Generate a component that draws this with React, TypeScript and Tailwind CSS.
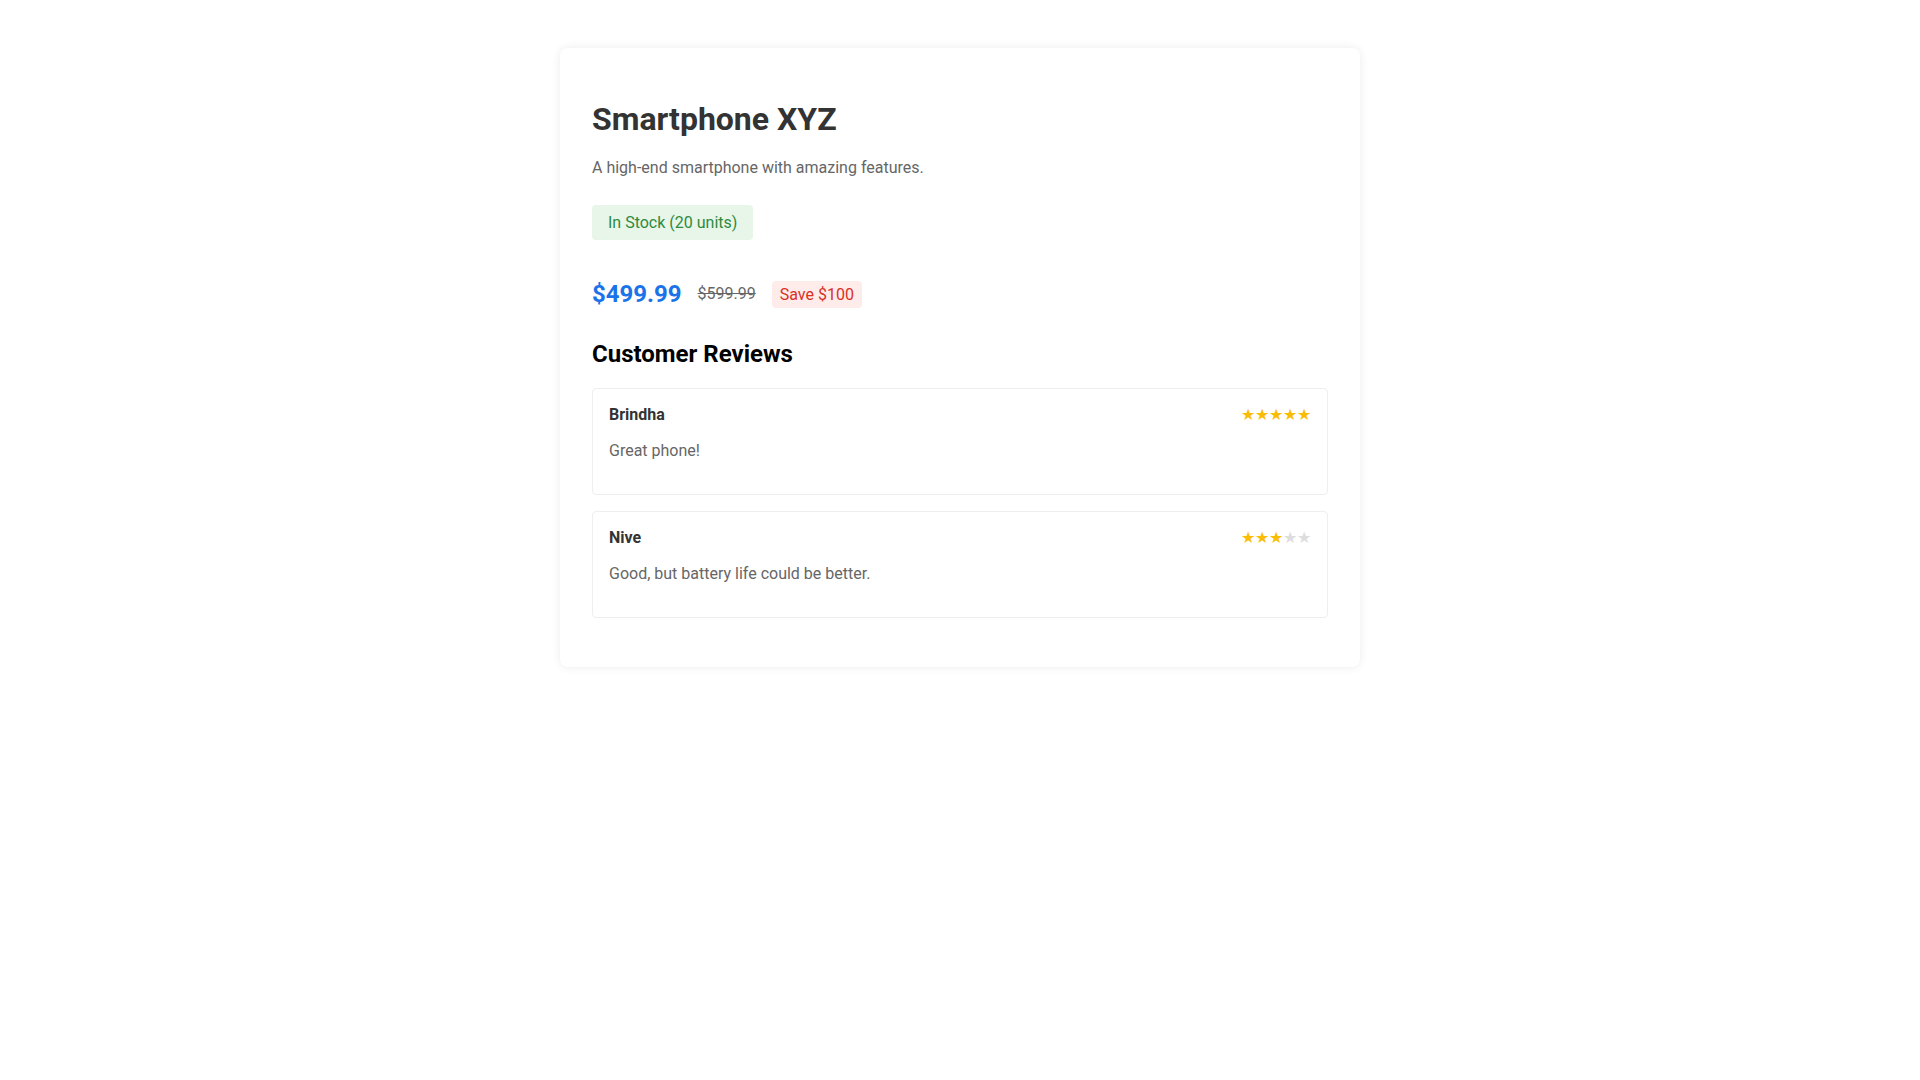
import React from "react";

const reviews = [
  { name: "Brindha", rating: 5, text: "Great phone!" },
  { name: "Nive", rating: 3, text: "Good, but battery life could be better." },
];

function Stars({ rating }: { rating: number }) {
  return (
    <div className="flex text-[16px] leading-none">
      {[1, 2, 3, 4, 5].map((i) => (
        <span key={i} className={i <= rating ? "text-[#fbbc04]" : "text-[#dddddd]"}>
          ★
        </span>
      ))}
    </div>
  );
}

export default function App() {
  return (
    <div className="min-h-screen bg-white pt-12" style={{ fontFamily: "Roboto, 'Liberation Sans', sans-serif" }}>
      <div className="mx-auto w-[800px] rounded-lg bg-white px-8 pt-8 pb-[49px] shadow-[0_0_10px_rgba(0,0,0,0.08)]">
        <h1 className="mt-[19px] text-[32px] font-bold leading-[40px] text-[#333333]">Smartphone XYZ</h1>
        <p className="mt-[17px] text-[16px] leading-[24px] text-[#666666]">A high-end smartphone with amazing features.</p>
        <div className="mt-[25px] inline-block rounded bg-[#e8f5e9] px-4 py-[7px] text-[16px] leading-[21px] text-[#2e8b3e]">
          In Stock (20 units)
        </div>
        <div className="mt-[40px] flex items-center gap-4">
          <span className="text-[24px] font-bold leading-[28px] text-[#1a73e8]">$499.99</span>
          <span className="text-[16px] text-[#666666] line-through">$599.99</span>
          <span className="rounded bg-[#fdecea] px-2 py-[3px] text-[16px] leading-[21px] text-[#d93025]">Save $100</span>
        </div>
        <h2 className="mt-[32px] text-[24px] font-bold leading-[28px] text-black">Customer Reviews</h2>
        <div className="mt-[20px] flex flex-col gap-[16px]">
          {reviews.map((r) => (
            <div key={r.name} className="rounded border border-[#eeeeee] px-4 pt-4 pb-[34px]">
              <div className="flex h-[19px] items-center justify-between">
                <span className="text-[16px] font-bold leading-[19px] text-[#333333]">{r.name}</span>
                <Stars rating={r.rating} />
              </div>
              <p className="mt-[17px] text-[16px] leading-[19px] text-[#666666]">{r.text}</p>
            </div>
          ))}
        </div>
      </div>
    </div>
  );
}
